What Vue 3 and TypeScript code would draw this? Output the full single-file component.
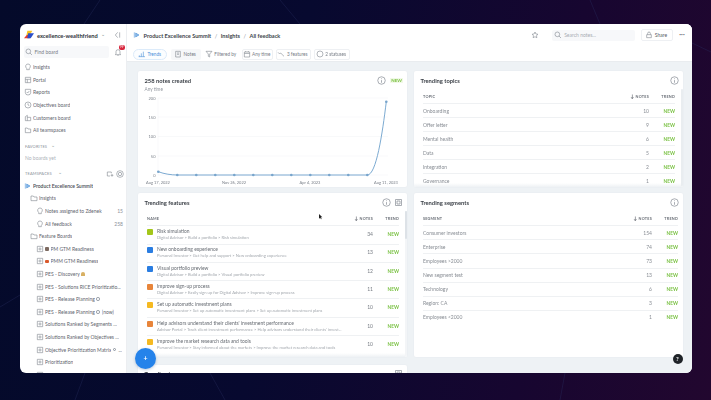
<script setup lang="ts">
const I: Record<string, string> = {
  bulb: 'M6 1.500a3.500 3.500 0 0 0-2 6.400V10h4V7.900A3.500 3.500 0 0 0 6 1.500Z',
  grid: 'M2 2h8v8H2ZM2 5h8M5 5v5',
  shield: 'M2 2h8v5a4 3.500 0 0 1-8 0ZM4 6l1.500 1.500L8 4.500',
  clock: 'M6 1.500a4.500 4.500 0 1 0 0 9 4.500 4.500 0 0 0 0-9ZM6 3.500V6l2 1',
  users: 'M2 10V4l3-2v8M5 5h5v5H2',
  team: 'M2 3h3l1 1.500h4V10H2Z',
  folder: 'M1.500 3h3.500l1 1.500h4.500V10h-9Z',
  board: 'M2 2h8v8H2ZM6 3.500v5M3.500 6h5',
  search: 'M5 1.500a3.500 3.500 0 1 0 0 7 3.500 3.500 0 0 0 0-7ZM7.500 7.500 10.500 10.500',
  info: 'M6 1a5 5 0 1 0 0 10A5 5 0 0 0 6 1ZM6 5.500V9M6 3.200v1',
  bell: 'M3 9V5.500a3 3 0 0 1 6 0V9l1 1H2ZM5 11h2',
  star: 'M6 1.500 7.400 4.500l3.100.4-2.300 2.100.6 3.100L6 8.600 3.200 10.100l.6-3.100L1.500 4.900l3.100-.4Z',
  notes: 'M2.500 2h7v8.500h-7ZM4.500 4.500h3M4.500 6.500h3',
  funnel: 'M1.500 2h9L7 6v4.500L5 9.500V6Z',
  cal: 'M2 3h8v7.500H2ZM2 5.200h8M4 1.500V3M8 1.500V3',
  feat: 'M1.500 3.500 4 6l1.500-1.500L10.500 9.500',
  status: 'M6 1.500a4.500 4.500 0 1 0 0 9 4.500 4.500 0 0 0 0-9Z',
  lock: 'M2.500 5.500h7V10h-7ZM4 5.500V3.500a2 2 0 0 1 4 0v2',
  collapse: 'M7 2 3.500 6 7 10M10 2v8',
  plusFolder: 'M2 3h6v2M2 3v6h4M7 8h4M9 6v4',
  gear: 'M6 1a5 5 0 1 0 0 10A5 5 0 0 0 6 1ZM6 3.500a2.500 2.500 0 1 1 0 5 2.500 2.500 0 0 1 0-5Z',
  square: 'M2 2h8v8H2ZM4 4h4v4H4Z',
}
const top = [['bulb', 'Insights'], ['grid', 'Portal'], ['shield', 'Reports'], ['clock', 'Objectives board'], ['users', 'Customers board'], ['team', 'All teamspaces']]
type Row = { label: string; level: number; icon: string; count?: string; mark?: string; tail?: string; after?: string }
const tree: Row[] = [
  { label: 'Product Excellence Summit', level: 0, icon: 'logo' },
  { label: 'Insights', level: 1, icon: 'folder' },
  { label: 'Notes assigned to Zdenek', level: 2, icon: 'bulb', count: '15' },
  { label: 'All feedback', level: 2, icon: 'bulb', count: '258' },
  { label: 'Feature Boards', level: 1, icon: 'folder' },
  { label: 'PM GTM Readiness', level: 2, icon: 'board', mark: 'build' },
  { label: 'PMM GTM Readiness', level: 2, icon: 'board', mark: 'fire' },
  { label: 'PES - Discovery', level: 2, icon: 'board', tail: 'figure' },
  { label: 'PES - Solutions RICE Prioritizatio...', level: 2, icon: 'board' },
  { label: 'PES - Release Planning', level: 2, icon: 'board', tail: 'ring' },
  { label: 'PES - Release Planning', level: 2, icon: 'board', tail: 'ring', after: '(now)' },
  { label: 'Solutions Ranked by Segments ...', level: 2, icon: 'board' },
  { label: 'Solutions Ranked by Objectives ...', level: 2, icon: 'board' },
  { label: 'Objective Prioritization Matrix', level: 2, icon: 'board', tail: 'ring', after: '...' },
  { label: 'Prioritization', level: 2, icon: 'board' },
  { label: 'Scoring', level: 2, icon: 'board' },
]
const tabs = [
  { t: 'Notes', i: 'notes', c: 'tab filled' },
  { t: 'Filtered by', i: 'funnel', c: 'tab plain' },
  { t: 'Any time', i: 'cal', c: 'tab chip w31' },
  { t: '3 features', i: 'feat', c: 'tab chip w35' },
  { t: '2 statuses', i: 'status', c: 'tab chip w36' },
]
const topics = [['Onboarding', 10], ['Offer letter', 9], ['Mental health', 6], ['Data', 5], ['Integration', 2], ['Governance', 1]]
const segments = [['Consumer investors', 154], ['Enterprise', 74], ['Employees >2000', 73], ['New segment test', 13], ['Technology', 6], ['Region: CA', 3], ['Employees <2000', 1]]
const features = [
  ['#a3c61a', 'Risk simulation', 'Digital Advisor > Build a portfolio > Risk simulation', 34],
  ['#2a7de1', 'New onboarding experience', 'Personal Investor > Get help and support > New onboarding experience', 13],
  ['#2a7de1', 'Visual portfolio preview', 'Digital Advisor > Build a portfolio > Visual portfolio preview', 12],
  ['#e8853a', 'Improve sign-up process', 'Digital Advisor > Easily sign up for Digital Advisor > Improve sign-up process', 11],
  ['#f5b921', 'Set up automatic investment plans', 'Personal Investor > Set up automatic investment plans > Set up automatic investment plans', 10],
  ['#e8853a', 'Help advisors understand their clients\' investment performance', 'Advisor Portal > Track client investment performance > Help advisors understand their clients\' invest...', 10],
  ['#f5b921', 'Improve the market research data and tools', 'Personal Investor > Stay informed about the markets > Improve the market research data and tools', 10],
]
const yTicks = [[200, 4], [150, 23], [100, 42.5], [50, 62], [0, 81]]
const xTicks = [['Aug 17, 2022', 20], ['Nov 26, 2022', 96], ['Apr 4, 2023', 172], ['Aug 11, 2023', 248]]
const pts = Array.from({ length: 13 }, (_, i) => 20.3 + 19 * i)
const ys = pts.map((_, i) => (i === 0 ? 77.7 : i === 12 ? 7.7 : 81))
const line = `M${pts[0]} ${ys[0]}C${pts[0] + 6} 80 ${pts[1] - 6} 81 ${pts[1]} 81L${pts[11]} 81C${pts[11] + 9} 81 ${pts[12] - 4} 40 ${pts[12]} ${ys[12]}`
</script>

<template>
  <div class="desk">
    <svg class="streaks" viewBox="0 0 711 400" aria-hidden="true">
      <path d="M0 307 20 295M84 24 100 0M280 0 300 24M590 0 600 24M692 43 711 52M75 400 85 373M560 400 565 373M225 400 210 373" />
    </svg>
    <div class="win">
      <aside class="side">
        <div class="brand">
          <svg class="logo" viewBox="0 0 12 12"><path d="M0 10 5 4l2 6Z" fill="#e53b2c" /><path d="M4 1h6L7 6H3Z" fill="#f7c325" /><path d="M5 4h7L8 10H4Z" fill="#2a4fc9" /></svg>
          <b>excellence-wealthfriend</b><span class="caret">⌄</span>
          <svg class="ic push" viewBox="0 0 12 12"><path :d="I.collapse" /></svg>
        </div>
        <div class="findrow">
          <div class="find"><svg class="ic" viewBox="0 0 12 12"><path :d="I.search" /></svg>Find board</div>
          <div class="bell"><svg class="ic" viewBox="0 0 12 12"><path :d="I.bell" /></svg><span class="badge">99</span></div>
        </div>
        <nav class="list first">
          <div v-for="r in top" :key="r[1]" class="row l0"><svg class="ic" viewBox="0 0 12 12"><path :d="I[r[0]]" /></svg><span class="lbl">{{ r[1] }}</span></div>
        </nav>
        <div class="section fav">FAVORITES <span>⌄</span></div>
        <div class="none">No boards yet</div>
        <div class="section team">TEAMSPACES <span>⌄</span>
          <svg class="ic push" viewBox="0 0 12 12"><path :d="I.plusFolder" /></svg>
          <svg class="ic" viewBox="0 0 12 12"><path :d="I.gear" /></svg>
        </div>
        <nav class="list">
          <div v-for="(r, n) in tree" :key="n" class="row" :class="'l' + r.level">
            <svg v-if="r.icon === 'logo'" class="ic" viewBox="0 0 12 12"><path d="M2 2v8M4 3l5 3-5 3Z" class="bluepath" /></svg>
            <svg v-else class="ic" viewBox="0 0 12 12"><path :d="I[r.icon]" /></svg>
            <span v-if="r.mark === 'build'" class="mk dark"></span>
            <span v-if="r.mark === 'fire'" class="mk fire"></span>
            <span class="lbl" :class="{ strong: r.level === 0 }">{{ r.label }}</span>
            <span v-if="r.tail === 'figure'" class="tl gold"></span>
            <span v-if="r.tail === 'ring'" class="tl ring"></span>
            <span v-if="r.after" class="lbl">{{ r.after }}</span>
            <span v-if="r.count" class="count">{{ r.count }}</span>
          </div>
        </nav>
      </aside>

      <main class="main">
        <header class="head">
          <div class="crumbs">
            <svg class="ic" viewBox="0 0 12 12"><path d="M2 2v8M4 3l5 3-5 3Z" class="bluepath" /></svg>
            <b>Product Excellence Summit</b><i>/</i><b>Insights</b><i>/</i><b>All feedback</b>
            <svg class="ic star" viewBox="0 0 12 12"><path :d="I.star" /></svg>
            <div class="search"><svg class="ic" viewBox="0 0 12 12"><path :d="I.search" /></svg>Search notes...</div>
            <div class="share"><svg class="ic" viewBox="0 0 12 12"><path :d="I.lock" /></svg>Share</div>
            <span class="dots">•••</span>
          </div>
          <div class="tabs">
            <div class="tab active"><svg class="ic" viewBox="0 0 12 12"><path d="M2 10V8M5 10V5M8 10V2.500M10.500 10H1" /></svg>Trends</div>
            <div v-for="t in tabs" :key="t.t" :class="t.c"><svg class="ic" viewBox="0 0 12 12"><path :d="I[t.i]" /></svg>{{ t.t }}</div>
          </div>
        </header>

        <div class="content">
          <section class="card">
            <div class="ctitle"><h3>258 notes created</h3><svg class="ic big" viewBox="0 0 12 12"><path :d="I.info" /></svg><span class="newtag">NEW</span></div>
            <div class="anytime">Any time</div>
            <svg class="chart" viewBox="0 0 269 93">
              <line v-for="y in yTicks" :key="y[0]" x1="20" x2="250" :y1="y[1]" :y2="y[1]" class="grid" />
              <line x1="20" x2="20" y1="4" y2="81" class="grid" />
              <text v-for="y in yTicks" :key="'l' + y[0]" x="17.500" :y="y[1] + 1.500" text-anchor="end" class="tick">{{ y[0] }}</text>
              <text v-for="x in xTicks" :key="x[0]" :x="x[1]" y="90" text-anchor="middle" class="tick">{{ x[0] }}</text>
              <path :d="line" class="curve" />
              <circle v-for="(x, n) in pts" :key="n" :cx="x" :cy="ys[n]" r="1.300" class="dot" />
            </svg>
          </section>

          <section class="card fadeout">
            <div class="ctitle"><h3>Trending topics</h3><svg class="ic big" viewBox="0 0 12 12"><path :d="I.info" /></svg></div>
            <div class="thead tb"><span>TOPIC</span><span class="num"><em>↓</em> NOTES</span><span class="num">TREND</span></div>
            <div v-for="r in topics" :key="r[0]" class="trow tb"><span>{{ r[0] }}</span><span class="num">{{ r[1] }}</span><span class="num new">NEW</span></div>
            <span class="bar tall"></span>
          </section>

          <section class="card fadeout">
            <div class="ctitle"><h3>Trending features</h3><svg class="ic big" viewBox="0 0 12 12"><path :d="I.info" /></svg><svg class="ic big" viewBox="0 0 12 12"><path :d="I.square" /></svg></div>
            <div class="thead tb feat"><span>NAME</span><span class="num"><em>↓</em> NOTES</span><span class="num">TREND</span></div>
            <div v-for="f in features" :key="f[1]" class="frow tb feat">
              <div class="fname">
                <span class="swatch" :style="{ background: String(f[0]) }"></span>
                <div class="ftext"><div class="fmain">{{ f[1] }}</div><div class="fsub">{{ f[2] }}</div></div>
              </div>
              <span class="num up">{{ f[3] }}</span><span class="num new up">NEW</span>
            </div>
            <span class="bar track"></span><span class="bar thumb"></span>
          </section>

          <section class="card">
            <div class="ctitle"><h3>Trending segments</h3><svg class="ic big" viewBox="0 0 12 12"><path :d="I.info" /></svg></div>
            <div class="thead tb seg"><span>SEGMENT</span><span class="num"><em>↓</em> NOTES</span><span class="num">TREND</span></div>
            <div v-for="r in segments" :key="String(r[0]) + r[1]" class="trow tb seg"><span>{{ r[0] }}</span><span class="num">{{ r[1] }}</span><span class="num new">NEW</span></div>
          </section>

          <section class="card third">
            <div class="ctitle"><h3>Trending type</h3><svg class="ic big" viewBox="0 0 12 12"><path :d="I.square" /></svg></div>
          </section>
        </div>
      </main>
      <button class="fab">+</button>
      <span class="help">?</span>
      <svg class="cursor" viewBox="0 0 6 9"><path d="M0 0v7l1.800-1.500L3 8l1-.5-1.200-2.500H5Z" /></svg>
    </div>
  </div>
</template>

<style>
html, body { margin: 0; background: #0a0730; }
</style>

<style scoped>
.desk {
  position: relative;
  width: 711px;
  height: 400px;
  box-sizing: border-box;
  padding: 24px 19px 27px 20px;
  overflow: hidden;
  background: linear-gradient(100deg, #040a2a 0%, #07092f 40%, #170630 75%, #22072f 100%);
  font-family: Lato, "Noto Sans", sans-serif;
  color: #3a3f47;
}
.streaks { position: absolute; inset: 0; width: 711px; height: 400px; }
.streaks path { fill: none; stroke: #2b2f63; stroke-width: .6; opacity: .6; }
.win {
  position: relative;
  display: flex;
  height: 349px;
  border-radius: 6px;
  overflow: hidden;
  background: #fff;
  filter: blur(.45px);
}
.ic { width: 8px; height: 8px; margin: 0 -1px; flex: none; fill: none; stroke: #80868f; stroke-width: .9; }
.ic.big { width: 9px; height: 9px; margin: 0 -1px; }
.ic.push { margin-left: auto; }
.bluepath { stroke: #4a90d9; fill: #8bbbe8; }

.side { width: 107px; flex: none; box-sizing: border-box; border-right: 1px solid #eceef1; overflow: hidden; font-size: 5px; }
.brand { display: flex; align-items: center; height: 22px; padding: 0 6px 0 4px; gap: 3px; font-size: 5.700px; color: #2f343b; }
.logo { width: 10px; height: 10px; flex: none; }
.caret { color: #7a808a; font-size: 5px; margin-top: -2px; }
.findrow { display: flex; align-items: center; height: 12px; padding-left: 4px; }
.find { display: flex; align-items: center; gap: 2.500px; width: 85px; height: 12px; box-sizing: border-box; padding-left: 2px; background: #f7f8fa; border-radius: 2px; color: #777d86; }
.bell { position: relative; margin-left: 6px; display: flex; }
.badge { position: absolute; left: 3.500px; top: -3px; width: 6.500px; height: 4.500px; border-radius: 2px; background: #d7263d; color: #fff; font-size: 3px; line-height: 4.500px; text-align: center; }
.list.first { margin-top: 3px; }
.row { display: flex; align-items: center; gap: 2px; height: 12.600px; padding-right: 3px; color: #5f656e; white-space: nowrap; }
.l0 { padding-left: 5px; }
.l1 { padding-left: 11px; }
.l2 { padding-left: 17px; }
.lbl { overflow: hidden; text-overflow: ellipsis; }
.strong { color: #454b53; font-weight: 600; }
.count { margin-left: auto; color: #8a9099; }
.mk { width: 3.500px; height: 3.500px; border-radius: 1px; flex: none; }
.dark { background: #7d6a61; }
.fire { background: #d9582b; }
.tl { width: 3.500px; height: 3.500px; flex: none; margin-left: -.5px; }
.gold { background: #d8b063; border-radius: 2px 2px 0 0; }
.ring { border: .6px solid #8b929c; border-radius: 50%; box-sizing: border-box; }
.section { display: flex; align-items: center; gap: 2px; height: 8px; padding: 0 3px 0 5px; font-size: 4px; letter-spacing: .15px; color: #8a9099; }
.section span { font-size: 4.500px; margin: -2px 0 0 2px; }
.fav { margin-top: 6px; }
.none { margin-top: 3px; padding-left: 5px; height: 9px; line-height: 9px; font-size: 5px; color: #aeb3ba; }
.team { margin: 7px 0 2px; gap: 4px; }

.main { flex: 1; min-width: 0; display: flex; flex-direction: column; background: #eef2f5; }
.head { flex: none; height: 38px; box-sizing: border-box; background: #fff; border-bottom: 1px solid #e9ecef; }
.crumbs { display: flex; align-items: center; height: 22px; padding: 0 7px; gap: 3.500px; font-size: 5.600px; color: #41464d; }
.crumbs b { font-weight: 700; }
.crumbs i { font-style: normal; color: #8a9099; }
.ic.star { margin-left: auto; margin-right: 10px; }
.search { display: flex; align-items: center; gap: 3px; width: 83px; height: 11px; box-sizing: border-box; padding-left: 3px; background: #f7f8fa; border-radius: 2px; color: #a7acb3; font-size: 5px; font-weight: 400; }
.share { display: flex; align-items: center; justify-content: center; gap: 2.500px; width: 32px; height: 12px; margin-left: 2px; box-sizing: border-box; border: .5px solid #eef0f3; border-radius: 2px; font-size: 5px; color: #555b64; }
.dots { margin-left: 3px; font-size: 3px; letter-spacing: .2px; color: #666c75; }
.tabs { display: flex; align-items: center; height: 16px; padding-left: 6px; gap: 3.500px; font-size: 4.700px; color: #777d86; }
.tab { display: flex; align-items: center; justify-content: center; gap: 2.500px; height: 11px; box-sizing: border-box; border-radius: 2px; white-space: nowrap; flex: none; }
.active { width: 34px; border: .5px solid #dcebfa; border-radius: 6px; color: #4a90d9; background: #fbfdff; }
.active .ic { stroke: #4a90d9; }
.filled { width: 30px; background: #f6f7f9; }
.plain { width: 34px; }
.chip { border: .5px solid #eef0f3; }
.w31 { width: 31px; }
.w35 { width: 35px; margin-left: -.5px; }
.w36 { width: 36px; margin-left: -.5px; }

.content {
  flex: 1;
  min-height: 0;
  display: grid;
  grid-template-columns: 269px 269px;
  grid-template-rows: 115.700px 163.400px 60px;
  column-gap: 7px;
  row-gap: 6.600px;
  padding: 9px 9px 0 11px;
  overflow: hidden;
}
.card { position: relative; background: #fff; border-radius: 2px; overflow: hidden; box-shadow: 0 0 2px rgba(40, 60, 80, .05); }
.third { margin-top: 1.700px; }
.fadeout::after { content: ""; position: absolute; left: 0; right: 2px; bottom: 0; height: 4px; background: linear-gradient(rgba(240, 243, 246, 0), #eef1f4); }
.ctitle { display: flex; align-items: center; height: 18px; padding: 0 5px 0 6.500px; gap: 5px; }
.ctitle h3 { margin: 0 auto 0 0; font-size: 5.800px; font-weight: 700; color: #3a3f46; }
.newtag { font-size: 4.500px; font-weight: 700; color: #7cc142; background: #f1f9e8; padding: 0 1px; margin-right: -1px; }
.anytime { margin: -3.500px 0 1.500px 6.500px; height: 7px; font-size: 4.700px; color: #92979f; line-height: 7px; }
.chart { display: block; width: 269px; height: 93px; }
.grid { stroke: #f1f3f5; stroke-width: .5; }
.tick { font-size: 4px; fill: #7b818a; }
.curve { fill: none; stroke: #6da0cc; stroke-width: .9; }
.dot { fill: #78a5cc; }

.tb { display: grid; grid-template-columns: 1fr 30px 26px; align-items: center; margin: 0 8px 0 9px; }
.tb.seg { margin-right: 5px; }
.thead { height: 14px; font-size: 3.800px; font-weight: 700; letter-spacing: .2px; color: #6b7078; }
.thead em { font-style: normal; font-size: 5px; color: #5b6068; }
.trow { height: 14.100px; border-top: .5px solid #eff1f3; box-sizing: border-box; font-size: 5px; color: #888d94; }
.num { text-align: right; }
.new { font-size: 4.800px; font-weight: 700; color: #7ac143; }
.frow { height: 18.300px; border-top: .5px solid #eff1f3; box-sizing: border-box; font-size: 5px; color: #777c84; }
.up { margin-top: -1.500px; }
.fname { display: flex; gap: 4px; min-width: 0; }
.swatch { width: 6px; height: 6px; flex: none; border-radius: 1px; margin-top: 1px; }
.ftext { min-width: 0; }
.fmain { font-size: 4.950px; line-height: 7px; color: #666b72; white-space: nowrap; }
.fsub { font-size: 4.150px; line-height: 6.500px; color: #a3a8ae; white-space: nowrap; }
.bar { position: absolute; right: 0; width: 2px; }
.tall { top: 18px; bottom: 0; background: #e9edf0; border-radius: 1px; }
.track { top: 18px; bottom: 0; background: #f3f5f7; }
.thumb { top: 18px; height: 28px; background: #dde2e7; border-radius: 1px; }

.fab { position: absolute; left: 115px; top: 324px; width: 21px; height: 21px; padding: 0; border: 0; border-radius: 50%; background: #2583ea; color: #fff; font: 700 7px/21px Lato, sans-serif; box-shadow: 0 1px 3px rgba(30, 80, 150, .3); }
.help { position: absolute; left: 652.500px; top: 330px; width: 10px; height: 10px; border-radius: 50%; background: #1f2328; color: #fff; font-size: 6px; font-weight: 700; line-height: 10px; text-align: center; }
.cursor { position: absolute; left: 299px; top: 190px; width: 4px; height: 6px; fill: #222; }
</style>
